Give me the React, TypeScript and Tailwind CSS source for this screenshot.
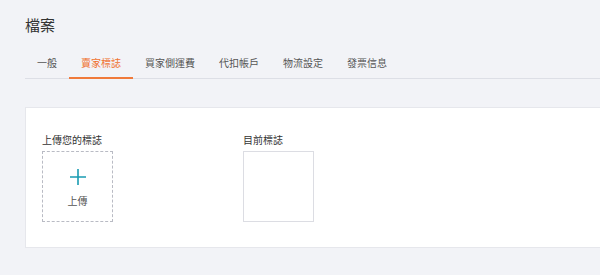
const tabs = ["一般", "賣家標誌", "買家側運費", "代扣帳戶", "物流設定", "發票信息"];

export default function App() {
  return (
    <div
      className="min-h-screen bg-[#f2f3f7] pl-[25px] pt-[14px]"
      style={{ fontFamily: '"Noto Sans CJK TC", "Noto Sans", sans-serif' }}
    >
      <h1 className="text-[15px] leading-[22px] text-[#333]">檔案</h1>

      <div className="mt-[19px] flex border-b border-[#dddfe6]">
        {tabs.map((tab, i) => (
          <div
            key={tab}
            className={
              i === 1
                ? "-mb-px border-b-2 border-[#f07a3a] px-3 pb-[7px] pt-[1px] text-[10px] leading-[14px] text-[#f0712f]"
                : "px-3 pb-[8px] pt-[1px] text-[10px] leading-[14px] text-[#555]"
            }
          >
            {tab}
          </div>
        ))}
      </div>

      <div className="mt-[28px] h-[141px] border border-r-0 border-[#e6e7ec] bg-white pl-4 pt-[25px]">
        <div className="flex">
          <div className="w-[201px]">
            <div className="text-[10px] leading-[14px] text-[#333]">上傳您的標誌</div>
            <div className="mt-1 flex h-[71px] w-[71px] flex-col items-center justify-center border border-dashed border-[#b9bbc4]">
              <svg width="18" height="18" viewBox="0 0 18 18" className="mt-[2px]">
                <path d="M9 1v16M1 9h16" stroke="#1a9cb2" strokeWidth="1.6" />
              </svg>
              <span className="mt-[9px] text-[10px] leading-[12px] text-[#555]">上傳</span>
            </div>
          </div>
          <div>
            <div className="text-[10px] leading-[14px] text-[#333]">目前標誌</div>
            <div className="mt-1 h-[71px] w-[71px] border border-[#dcdde3]" />
          </div>
        </div>
      </div>
    </div>
  );
}
